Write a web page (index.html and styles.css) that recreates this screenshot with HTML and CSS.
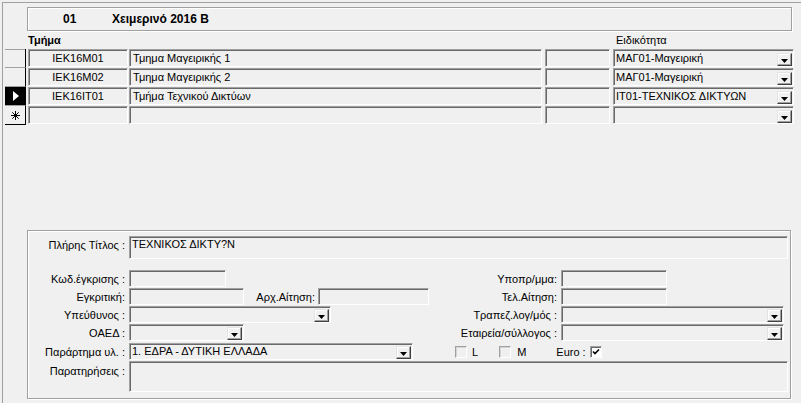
FILE: index.html
```html
<!DOCTYPE html>
<html lang="el">
<head>
    <meta charset="UTF-8">
    <title>Τμήματα</title>
    <link rel="stylesheet" href="styles.css">
</head>
<body>
    <div class="window">
        <div class="header">
            <span class="hcode">01</span>
            <span class="htitle">Χειμερινό 2016 Β</span>
        </div>

        <div class="captions">
            <span class="cap-main">Τμήμα</span>
            <span class="cap-spec">Ειδικότητα</span>
        </div>

        <div class="grid">
            <div class="row">
                <div class="sel top"></div>
                <div class="cell code">IEK16M01</div>
                <div class="cell name">Τμημα Μαγειρικής 1</div>
                <div class="cell blank"></div>
                <div class="cell combo spec"><span class="combo-text">ΜΑΓ01-Μαγειρική</span><span class="btn"><svg width="7" height="4" viewBox="0 0 7 4"><path d="M0 0H7L3.5 4Z" fill="#000"/></svg></span></div>
            </div>
            <div class="row">
                <div class="sel"></div>
                <div class="cell code">IEK16M02</div>
                <div class="cell name">Τμημα Μαγειρικής 2</div>
                <div class="cell blank"></div>
                <div class="cell combo spec"><span class="combo-text">ΜΑΓ01-Μαγειρική</span><span class="btn"><svg width="7" height="4" viewBox="0 0 7 4"><path d="M0 0H7L3.5 4Z" fill="#000"/></svg></span></div>
            </div>
            <div class="row">
                <div class="sel current"><svg width="6" height="10" viewBox="0 0 6 10"><path d="M0 0L6 5L0 10Z" fill="#fff"/></svg></div>
                <div class="cell code">IEK16IT01</div>
                <div class="cell name">Τμήμα Τεχνικού Δικτύων</div>
                <div class="cell blank"></div>
                <div class="cell combo spec"><span class="combo-text">IT01-ΤΕΧΝΙΚΟΣ ΔΙΚΤΥΩΝ</span><span class="btn"><svg width="7" height="4" viewBox="0 0 7 4"><path d="M0 0H7L3.5 4Z" fill="#000"/></svg></span></div>
            </div>
            <div class="row">
                <div class="sel new"><svg width="9" height="9" viewBox="0 0 9 9"><path d="M4.5 0V9M0 4.5H9M1.3 1.3L7.7 7.7M7.7 1.3L1.3 7.7" stroke="#000" stroke-width="1"/></svg></div>
                <div class="cell code"></div>
                <div class="cell name"></div>
                <div class="cell blank"></div>
                <div class="cell combo spec"><span class="combo-text"></span><span class="btn"><svg width="7" height="4" viewBox="0 0 7 4"><path d="M0 0H7L3.5 4Z" fill="#000"/></svg></span></div>
            </div>
        </div>

        <div class="detail">
            <div class="frow title-row">
                <div class="flbl">Πλήρης Τίτλος :</div>
                <div class="cell title-field">ΤΕΧΝΙΚΟΣ ΔΙΚΤΥ?Ν</div>
            </div>

            <div class="frow first">
                <div class="flbl">Κωδ.έγκρισης :</div>
                <div class="fleft"><div class="cell w-kod"></div></div>
                <div class="rlbl">Υποπρ/μμα:</div>
                <div class="cell w-short"></div>
            </div>

            <div class="frow">
                <div class="flbl">Εγκριτική:</div>
                <div class="fleft">
                    <div class="cell w-egk"></div>
                    <div class="albl">Αρχ.Αίτηση:</div>
                    <div class="cell w-arx"></div>
                </div>
                <div class="rlbl">Τελ.Αίτηση:</div>
                <div class="cell w-short"></div>
            </div>

            <div class="frow">
                <div class="flbl">Υπεύθυνος :</div>
                <div class="fleft">
                    <div class="cell combo w-ypeu"><span class="combo-text"></span><span class="btn"><svg width="7" height="4" viewBox="0 0 7 4"><path d="M0 0H7L3.5 4Z" fill="#000"/></svg></span></div>
                </div>
                <div class="rlbl">Τραπεζ.λογ/μός :</div>
                <div class="cell combo w-long"><span class="combo-text"></span><span class="btn"><svg width="7" height="4" viewBox="0 0 7 4"><path d="M0 0H7L3.5 4Z" fill="#000"/></svg></span></div>
            </div>

            <div class="frow">
                <div class="flbl">ΟΑΕΔ :</div>
                <div class="fleft">
                    <div class="cell combo w-egk"><span class="combo-text"></span><span class="btn"><svg width="7" height="4" viewBox="0 0 7 4"><path d="M0 0H7L3.5 4Z" fill="#000"/></svg></span></div>
                </div>
                <div class="rlbl">Εταιρεία/σύλλογος :</div>
                <div class="cell combo w-long"><span class="combo-text"></span><span class="btn"><svg width="7" height="4" viewBox="0 0 7 4"><path d="M0 0H7L3.5 4Z" fill="#000"/></svg></span></div>
            </div>

            <div class="frow branch-row">
                <div class="flbl">Παράρτημα υλ. :</div>
                <div class="fleft">
                    <div class="cell combo w-par"><span class="combo-text">1. ΕΔΡΑ - ΔΥΤΙΚΗ ΕΛΛΑΔΑ</span><span class="btn"><svg width="7" height="4" viewBox="0 0 7 4"><path d="M0 0H7L3.5 4Z" fill="#000"/></svg></span></div>
                </div>
                <div class="checks">
                    <span class="chk off"></span><span class="chk-lbl lbl-l">L</span>
                    <span class="chk off"></span><span class="chk-lbl lbl-m">M</span>
                    <span class="chk-lbl lbl-euro">Euro :</span>
                    <span class="chk on"><svg width="8" height="8" viewBox="0 0 8 8"><path d="M1 3.5L3 5.5L7 1.5" fill="none" stroke="#000" stroke-width="1.6"/></svg></span>
                </div>
            </div>

            <div class="frow notes-row">
                <div class="flbl">Παρατηρήσεις :</div>
                <div class="cell notes-field"></div>
            </div>
        </div>
    </div>
</body>
</html>
```

FILE: styles.css
```css
body {
    margin: 0;
    background-color: #f0f0f0; /* dialog grey */
    font-family: "Liberation Sans", Arial, sans-serif;
    font-size: 11px;
    color: #000;
}

.window {
    margin: 2px 0 0 2px;
    height: 401px;
    box-sizing: border-box;
    border-top: 1px solid #a0a0a0;
    border-left: 1px solid #a0a0a0;
}

/* etched header box */
.header {
    margin: 4px 0 0 24px;
    width: 765px;
    height: 24px;
    box-sizing: border-box;
    border: 1px solid #a0a0a0;
    box-shadow: inset 1px 1px 0 #fff, 1px 1px 0 #fff;
    display: flex;
    align-items: center;
    padding-left: 35px;
    font-size: 12px;
    font-weight: bold;
}

.hcode {
    width: 49px;
}

.captions {
    height: 18px;
    box-sizing: border-box;
    padding-top: 3px;
    margin-left: 25px;
    display: flex;
}

.cap-main {
    width: 585px;
    font-weight: bold;
}

.cap-spec {
    padding-left: 3px;
}

/* datasheet rows */
.row {
    display: flex;
    height: 19px;
}

.sel {
    width: 21px;
    height: 19px;
    margin-left: 2px;
    box-sizing: border-box;
    border-right: 1px solid #000;
    border-bottom: 1px solid #a0a0a0;
    display: flex;
    align-items: center;
    justify-content: center;
}

.sel.top {
    box-shadow: inset 0 1px 0 #a0a0a0;
}

.sel.current {
    background-color: #000;
    padding-left: 1px;
}

.sel.new {
    border-bottom-color: #000;
}

.cell {
    height: 18px;
    box-sizing: border-box;
    border: 1px solid;
    border-color: #a0a0a0 #fff #fff #a0a0a0;
    box-shadow: inset 1px 1px 0 #696969;
    padding: 0 3px;
    line-height: 16px;
    white-space: nowrap;
    overflow: hidden;
}

.row .code {
    width: 100px;
    margin-left: 2px;
    text-align: center;
}

.row .name {
    width: 413px;
    margin-left: 1px;
}

.row .blank {
    width: 65px;
    margin-left: 3px;
}

.row .spec {
    width: 181px;
    margin-left: 3px;
}

.combo {
    display: flex;
    align-items: center;
    padding: 0 1px 0 2px;
}

.combo-text {
    flex: 1;
    overflow: hidden;
}

.btn {
    width: 15px;
    height: 13px;
    margin-top: 2px;
    box-sizing: border-box;
    border: 1px solid;
    border-color: #e3e3e3 #404040 #404040 #e3e3e3;
    box-shadow: inset -1px -1px 0 #a0a0a0, inset 1px 1px 0 #fff;
    background-color: #f0f0f0;
    display: flex;
    align-items: flex-end;
    justify-content: center;
    padding-bottom: 2px;
}

.btn svg {
    display: block;
}

/* detail form */
.detail {
    margin: 105px 0 0 24px;
    width: 764px;
    height: 169px;
    box-sizing: border-box;
    border: 1px solid #a0a0a0;
    box-shadow: inset 1px 1px 0 #fff, 1px 1px 0 #fff;
    padding-top: 5px;
}

.frow {
    display: flex;
    align-items: center;
    height: 17px;
    margin-bottom: 1px;
}

.frow .cell {
    height: 17px;
    line-height: 15px;
}

.flbl {
    width: 100px;
    margin-right: 1px;
    padding-right: 3px;
    box-sizing: border-box;
    text-align: right;
    white-space: nowrap;
}

.title-row {
    height: 23px;
    align-items: flex-start;
}

.title-row .flbl {
    padding-top: 3px;
}

.frow .title-field {
    width: 659px;
    height: 23px;
    padding: 1px 2px;
    line-height: 13px;
}

.first {
    margin-top: 11px;
}

.fleft {
    width: 311px;
    display: flex;
    align-items: center;
}

.rlbl {
    width: 119px;
    margin-right: 2px;
    padding-right: 2px;
    box-sizing: border-box;
    text-align: right;
    white-space: nowrap;
}

.albl {
    width: 74px;
    padding-right: 3px;
    box-sizing: border-box;
    text-align: right;
    white-space: nowrap;
}

.w-kod { width: 97px; }
.w-egk { width: 115px; }
.w-arx { width: 111px; }
.w-short { width: 106px; }
.w-ypeu { width: 202px; }
.w-long { width: 223px; }
.w-par { width: 284px; }

.branch-row {
    margin-top: 2px;
}

.checks {
    display: flex;
    align-items: center;
    margin-left: 15px;
}

.chk {
    width: 12px;
    height: 12px;
    box-sizing: border-box;
    border: 1px solid;
    display: flex;
    align-items: center;
    justify-content: center;
}

.chk.off {
    border-color: #a0a0a0 #fff #fff #a0a0a0;
    box-shadow: inset 1px 1px 0 #d4d4d4;
}

.chk.on {
    background-color: #fff;
    border-color: #a0a0a0 #fff #fff #a0a0a0;
    box-shadow: inset 1px 1px 0 #696969;
}

.lbl-l {
    margin: 0 21px 0 5px;
}

.lbl-m {
    margin: 0 30px 0 6px;
}

.lbl-euro {
    margin-right: 4px;
}

.notes-row {
    height: 31px;
    margin-top: 1px;
    align-items: flex-start;
}

.notes-row .flbl {
    padding-top: 4px;
}

.frow .notes-field {
    width: 659px;
    height: 31px;
}
```
